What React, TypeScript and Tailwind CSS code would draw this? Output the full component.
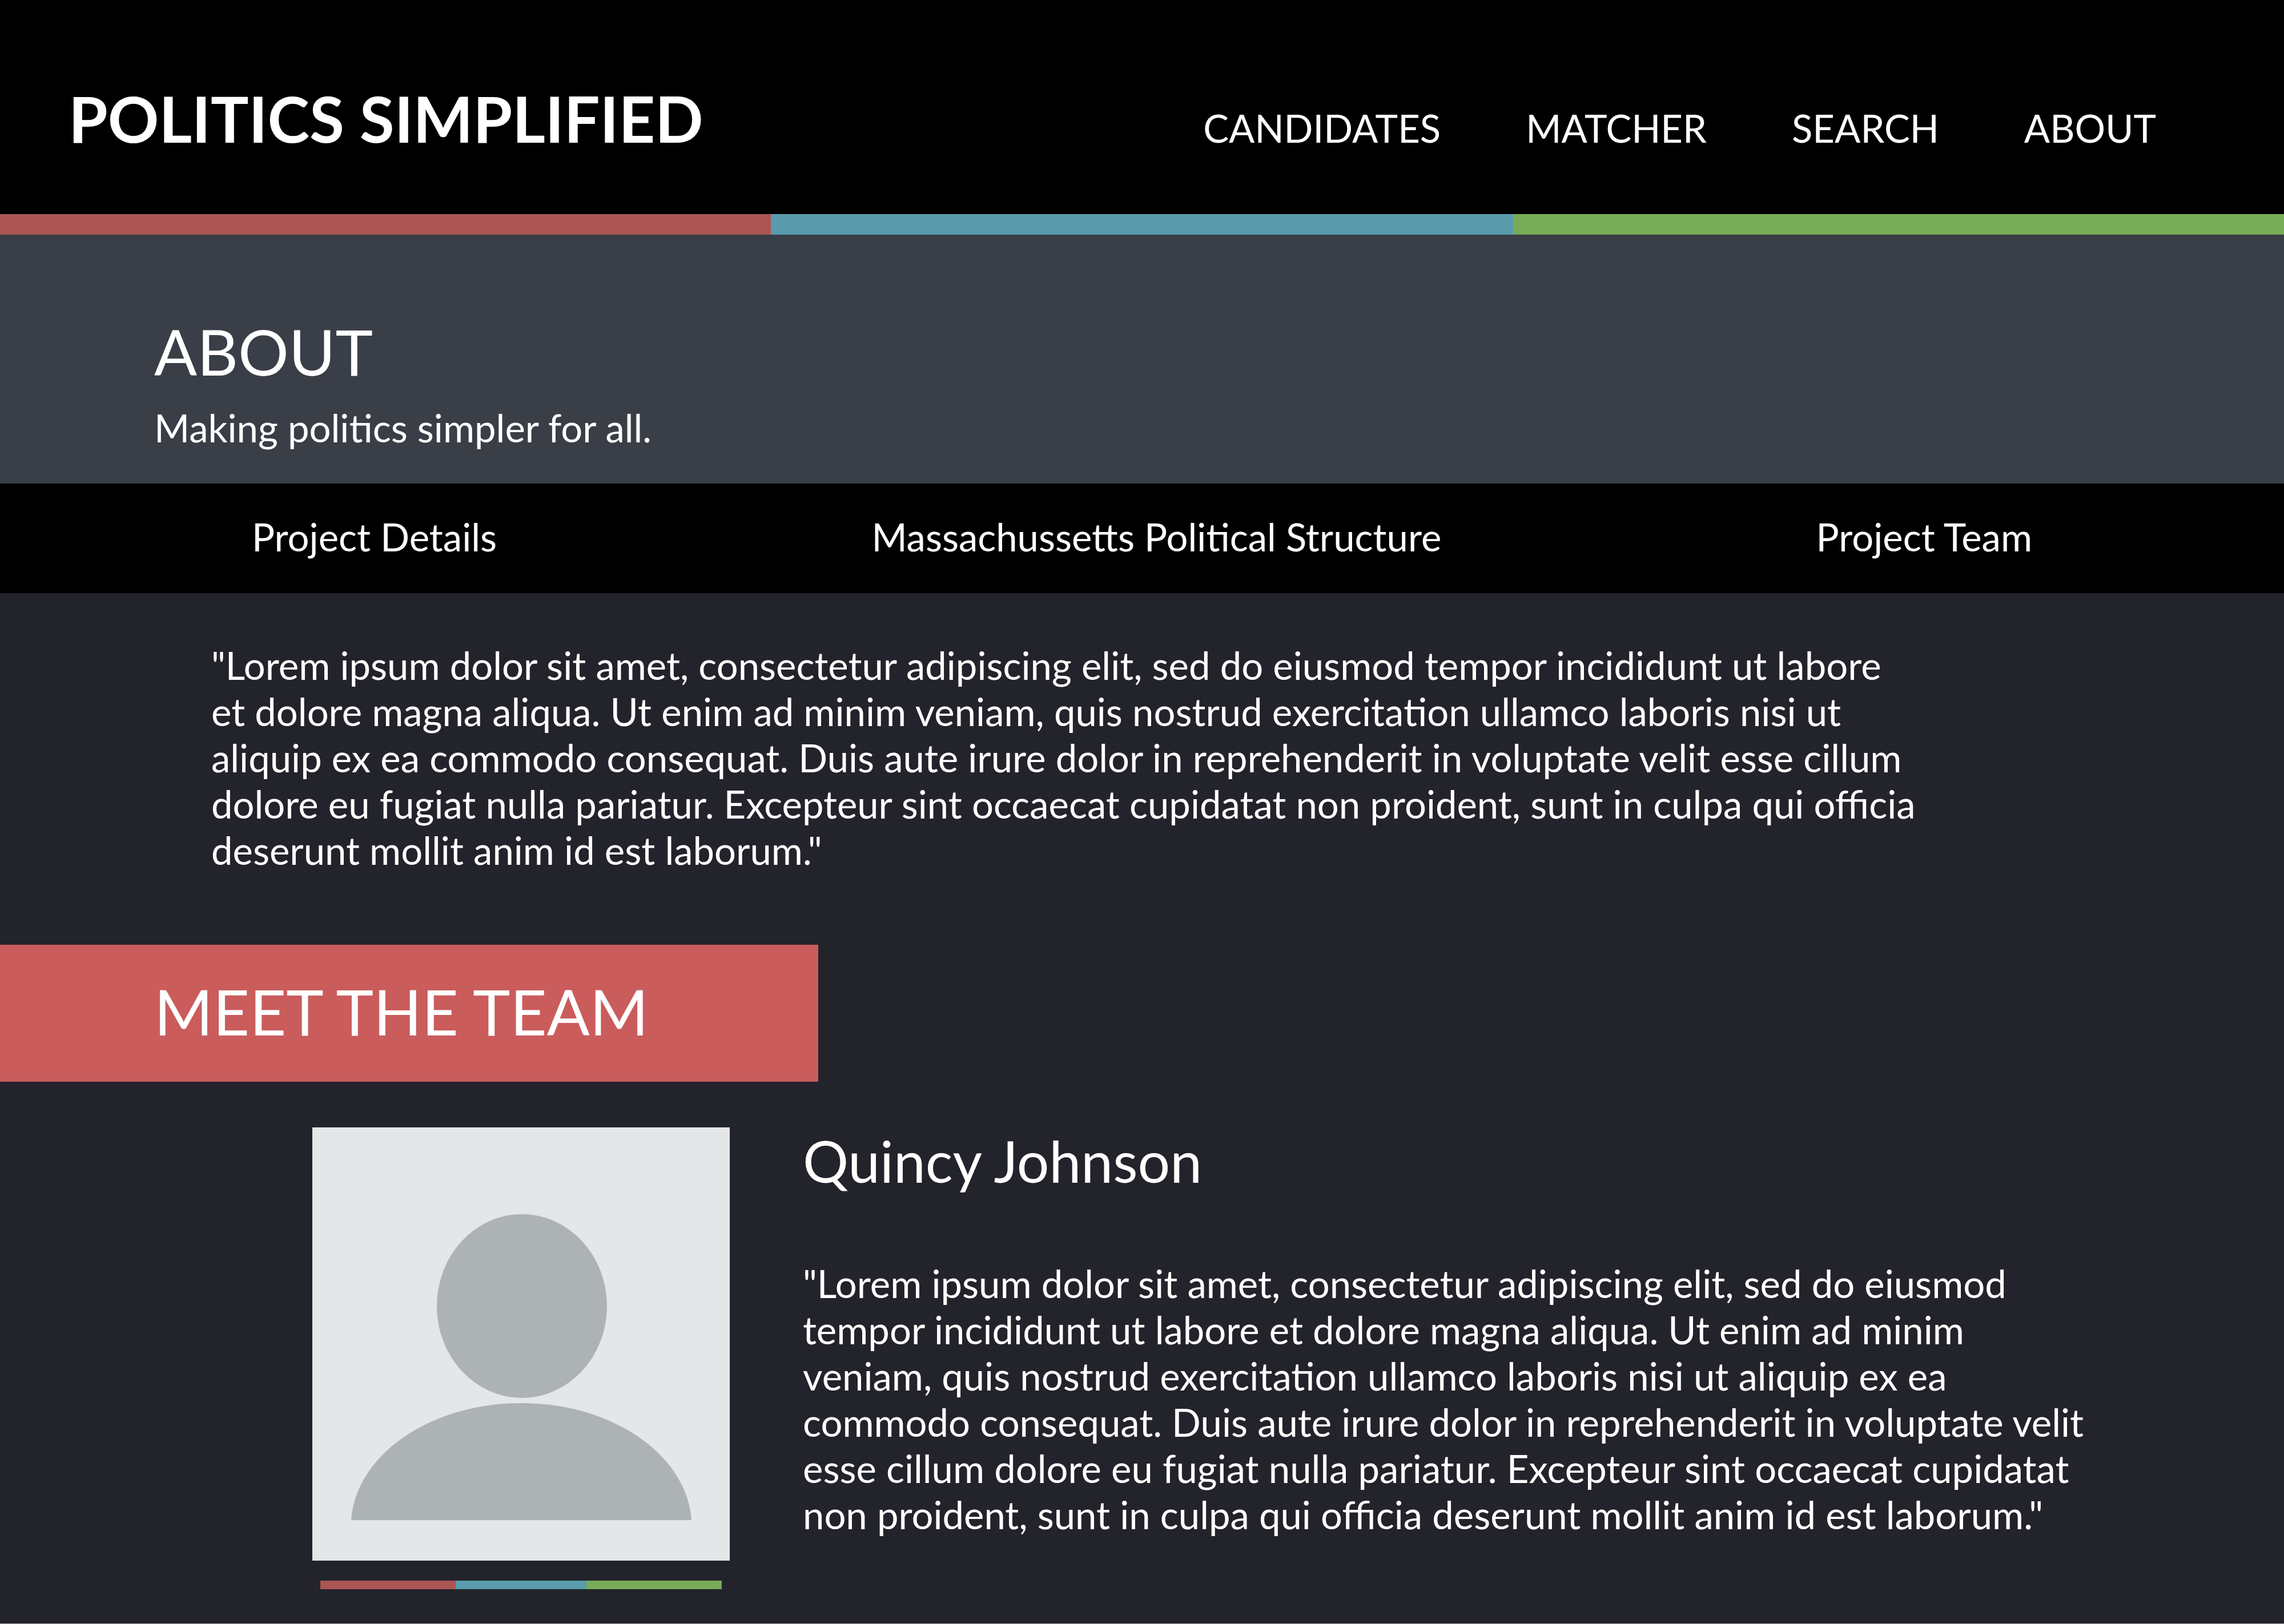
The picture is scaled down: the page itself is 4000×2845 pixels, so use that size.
const lorem =
  '"Lorem ipsum dolor sit amet, consectetur adipiscing elit, sed do eiusmod tempor incididunt ut labore et dolore magna aliqua. Ut enim ad minim veniam, quis nostrud exercitation ullamco laboris nisi ut aliquip ex ea commodo consequat. Duis aute irure dolor in reprehenderit in voluptate velit esse cillum dolore eu fugiat nulla pariatur. Excepteur sint occaecat cupidatat non proident, sunt in culpa qui officia deserunt mollit anim id est laborum."';

const navLinks = ["CANDIDATES", "MATCHER", "SEARCH", "ABOUT"];
const sections = ["Project Details", "Massachussetts Political Structure", "Project Team"];

function Stripes({ className }: { className: string }) {
  return (
    <div className={`grid grid-cols-[27fr_26fr_27fr] ${className}`}>
      <div className="bg-[#ac5555]" />
      <div className="bg-[#5a9cac]" />
      <div className="bg-[#78ac58]" />
    </div>
  );
}

function Portrait() {
  return (
    <svg viewBox="0 0 731 759" className="block w-full bg-[#e4e6e8]" role="img" aria-label="Portrait placeholder">
      <ellipse cx="367" cy="313" rx="149" ry="161" fill="#adb3b5" />
      <path d="M68 688C76 574 206 483 366 483S656 574 664 688Z" fill="#adb3b5" />
    </svg>
  );
}

export default function App() {
  return (
    <div className="min-h-screen border-b border-[#a8a8ac] bg-[#22232b] font-[Lato,sans-serif] text-[67px] leading-[81px] text-white">
      <header className="flex items-baseline justify-between bg-black pt-[140px] pr-[224px] pb-[100px] pl-[120px]">
        <h1 className="text-[111px] leading-[135px] font-bold">POLITICS SIMPLIFIED</h1>
        <nav className="flex gap-[149px]">
          {navLinks.map((label) => (
            <a key={label} href="#">
              {label}
            </a>
          ))}
        </nav>
      </header>
      <Stripes className="h-9" />

      <section className="bg-[#3a3e47] px-[270px] pt-[137px] pb-[57px]">
        <h2 className="text-[111px] leading-[135px]">ABOUT</h2>
        <p className="mt-[26px]">Making politics simpler for all.</p>
      </section>

      <nav className="flex justify-between bg-black px-[441px] pt-[53px] pb-[58px]">
        {sections.map((label) => (
          <a key={label} href="#">
            {label}
          </a>
        ))}
      </nav>

      <main className="pb-[60px]">
        <p className="pt-[86px] pr-[640px] pl-[370px]">{lorem}</p>

        <h2 className="mt-[125px] w-[1433px] bg-[#ca5c5c] pb-2 pl-[270px] text-[111px] leading-[232px]">MEET THE TEAM</h2>

        <article className="mt-20 flex items-start gap-[128px] pr-[340px] pl-[547px]">
          <div className="w-[731px] shrink-0">
            <Portrait />
            <Stripes className="mx-3.5 mt-[35px] h-[15px]" />
          </div>
          <div>
            <h3 className="text-[100px] leading-[117px]">Quincy Johnson</h3>
            <p className="mt-[116px]">{lorem}</p>
          </div>
        </article>
      </main>
    </div>
  );
}
